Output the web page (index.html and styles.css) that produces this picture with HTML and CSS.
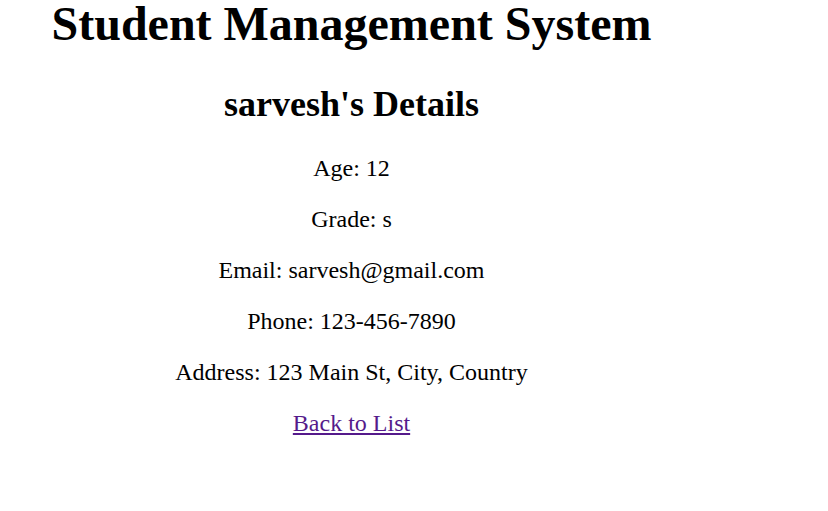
FILE: index.html
```html
<!DOCTYPE html>
<html>
<head>
<meta charset="utf-8">
<link rel="stylesheet" href="styles.css">
</head>
<body>
<div class="page">
  <h1 class="title">Student Management System</h1>
  <h2 class="name">sarvesh's Details</h2>
  <p class="row">Age: 12</p>
  <p class="row">Grade: s</p>
  <p class="row">Email: sarvesh@gmail.com</p>
  <p class="row">Phone: 123-456-7890</p>
  <p class="row">Address: 123 Main St, City, Country</p>
  <a class="back" href="#">Back to List</a>
</div>
</body>
</html>
```

FILE: styles.css
```css
html, body {
  margin: 0;
  padding: 0;
  background: #fff;
}
body {
  font-family: "Liberation Serif", "Times New Roman", serif;
  font-size: 24px;
  color: #000;
}
.page {
  width: 703px;
  text-align: center;
}
.title {
  font-size: 48px;
  line-height: 48px;
  font-weight: bold;
  margin: 0 0 35px;
}
.name {
  font-size: 36px;
  font-weight: bold;
  margin: 35px 0 30px;
}
.row {
  margin: 24px 0;
}
.back {
  color: #551a8b;
  text-decoration: underline;
}
```
